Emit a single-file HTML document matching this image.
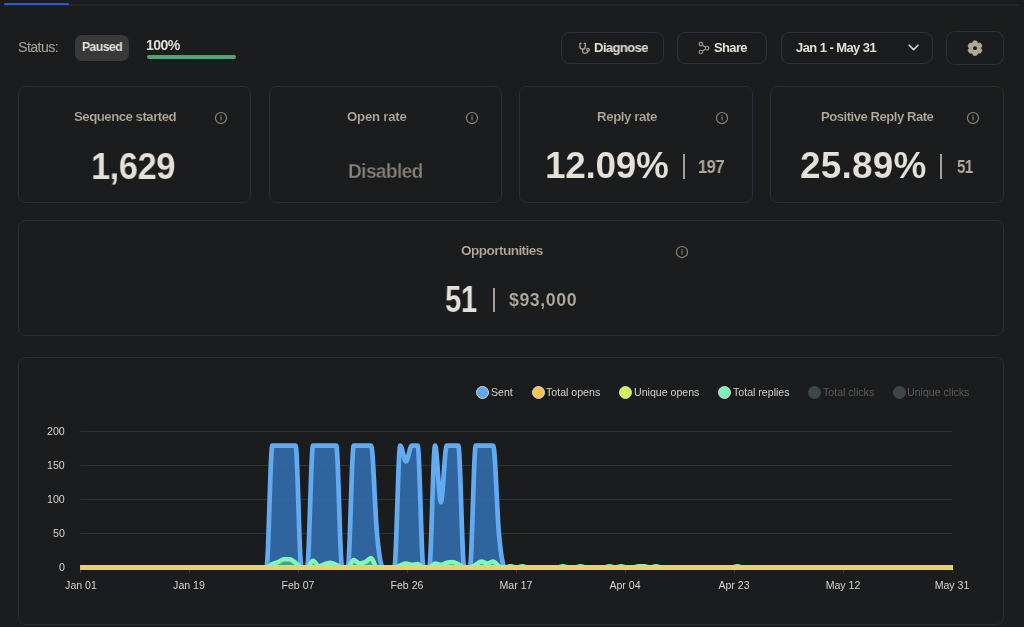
<!DOCTYPE html><html><head><meta charset="utf-8"><title>Sequence analytics</title><style>
*{margin:0;padding:0;box-sizing:border-box}
html,body{width:1024px;height:627px;overflow:hidden;background:#1b1c1e;font-family:"Liberation Sans",sans-serif}
.abs{position:absolute}
.t{white-space:nowrap;line-height:1;transform-origin:0 0;will-change:transform}
.card{position:absolute;border:1.5px solid #2a2d3a;border-radius:7.5px}
.btn{position:absolute;border:1.5px solid #2d3141;border-radius:8.5px}
.ct{position:absolute;white-space:nowrap;line-height:1;font-size:10.6px;color:#d8d3cb;will-change:transform}
</style></head><body>
<div class="abs" style="left:3.5px;top:4px;width:1015px;height:1.6px;background:#25262e"></div>
<div class="abs" style="left:3.5px;top:3.0px;width:65.5px;height:2.4px;background:#2a5ac6;border-radius:1px"></div>
<div class="abs t" style="left:17.65px;top:39.95px;font-size:14.244px;letter-spacing:-0.6px;font-weight:400;color:#a59e92;-webkit-text-stroke:0.1px #a59e92;">Status:</div>
<div class="abs" style="left:75px;top:35px;width:54px;height:26px;background:#38393a;border-radius:7px"></div>
<div class="abs t" style="left:81.68px;top:40.00px;font-size:13.081px;letter-spacing:-0.6px;font-weight:700;color:#e8e4dc;transform:scaleX(0.9357);">Paused</div>
<div class="abs t" style="left:146.4px;top:38.45px;font-size:14.099px;letter-spacing:-0.6px;font-weight:700;color:#e2ddd4;">100%</div>
<div class="abs" style="left:147px;top:55px;width:89px;height:4px;background:#4fa374;border-radius:2px"></div>
<div class="btn" style="left:560.75px;top:31.75px;width:103.50px;height:32.50px;"></div>
<div class="btn" style="left:677.25px;top:31.75px;width:90.00px;height:32.50px;"></div>
<div class="btn" style="left:780.55px;top:31.75px;width:152.10px;height:32.50px;"></div>
<div class="btn" style="left:945.75px;top:30.75px;width:58.30px;height:34.50px;"></div>
<svg class="abs" style="left:574px;top:38px" width="20" height="20" viewBox="0 0 20 20"><g fill="none" stroke="#a89f91" stroke-width="1.3" stroke-linecap="round" stroke-linejoin="round"><path d="M7.1 5.3H5.9V8.4C5.9 10.1 7 11.2 8.6 11.2C10.2 11.2 11.3 10.1 11.3 8.4V5.3H10.2"/><path d="M8.6 11.2V12.9C8.6 14.3 9.6 15.3 11 15.3C12.4 15.3 13.6 14.4 13.8 13.2"/><circle cx="14" cy="11.8" r="1.35"/></g></svg>
<div class="abs t" style="left:593.83px;top:40.60px;font-size:13.227px;letter-spacing:-0.6px;font-weight:700;color:#e4dfd6;transform:scaleX(0.9852);">Diagnose</div>
<svg class="abs" style="left:694px;top:38px" width="20" height="20" viewBox="0 0 20 20"><g fill="none" stroke="#a89f91" stroke-width="1.1"><circle cx="6.9" cy="6.1" r="1.75"/><circle cx="13.1" cy="10.2" r="1.75"/><circle cx="6.9" cy="14" r="1.75"/><path d="M8.4 7.1L11.5 9.2M11.5 11.2L8.4 13"/></g></svg>
<div class="abs t" style="left:713.95px;top:41.70px;font-size:12.936px;letter-spacing:-0.6px;font-weight:700;color:#e4dfd6;">Share</div>
<div class="abs t" style="left:796.0px;top:41.70px;font-size:12.936px;letter-spacing:-0.538px;font-weight:700;color:#e4dfd6;">Jan 1 - May 31</div>
<svg class="abs" style="left:904px;top:40px" width="20" height="14" viewBox="0 0 20 14"><path d="M5.2 5.2L9.6 9.6L14 5.2" fill="none" stroke="#d8d2c8" stroke-width="1.6" stroke-linecap="round" stroke-linejoin="round"/></svg>
<svg class="abs" style="left:965px;top:38px" width="20" height="20" viewBox="0 0 20 20"><path d="M11.52,3.01 L8.48,3.01 L7.78,4.36 L7.15,5.21 L6.10,5.33 L4.58,5.27 L3.06,7.89 L3.88,9.18 L4.30,10.15 L3.88,11.12 L3.06,12.41 L4.58,15.03 L6.10,14.97 L7.15,15.09 L7.78,15.94 L8.48,17.29 L11.52,17.29 L12.22,15.94 L12.85,15.09 L13.90,14.97 L15.42,15.03 L16.94,12.41 L16.12,11.12 L15.70,10.15 L16.12,9.18 L16.94,7.89 L15.42,5.27 L13.90,5.33 L12.85,5.21 L12.22,4.36Z" fill="#b0a798" stroke="#b0a798" stroke-width="1" stroke-linejoin="round"/><circle cx="10" cy="10.15" r="1.95" fill="#1b1c1e"/></svg>
<div class="card" style="left:17.65px;top:86.10px;width:233.70px;height:116.65px;"></div>
<svg class="abs" style="left:213.50px;top:110.80px" width="14" height="14" viewBox="0 0 14 14"><circle cx="7" cy="7" r="5.55" fill="none" stroke="#8f877b" stroke-width="1.15"/><circle cx="7" cy="4.75" r="0.7" fill="#8f877b"/><path d="M6.3 6.55H7.05V9.6" fill="none" stroke="#8f877b" stroke-width="1.05"/></svg>
<div class="card" style="left:268.65px;top:86.10px;width:233.70px;height:116.65px;"></div>
<svg class="abs" style="left:464.50px;top:110.80px" width="14" height="14" viewBox="0 0 14 14"><circle cx="7" cy="7" r="5.55" fill="none" stroke="#8f877b" stroke-width="1.15"/><circle cx="7" cy="4.75" r="0.7" fill="#8f877b"/><path d="M6.3 6.55H7.05V9.6" fill="none" stroke="#8f877b" stroke-width="1.05"/></svg>
<div class="card" style="left:519.15px;top:86.10px;width:233.70px;height:116.65px;"></div>
<svg class="abs" style="left:715.00px;top:110.80px" width="14" height="14" viewBox="0 0 14 14"><circle cx="7" cy="7" r="5.55" fill="none" stroke="#8f877b" stroke-width="1.15"/><circle cx="7" cy="4.75" r="0.7" fill="#8f877b"/><path d="M6.3 6.55H7.05V9.6" fill="none" stroke="#8f877b" stroke-width="1.05"/></svg>
<div class="card" style="left:770.25px;top:86.10px;width:233.70px;height:116.65px;"></div>
<svg class="abs" style="left:966.10px;top:110.80px" width="14" height="14" viewBox="0 0 14 14"><circle cx="7" cy="7" r="5.55" fill="none" stroke="#8f877b" stroke-width="1.15"/><circle cx="7" cy="4.75" r="0.7" fill="#8f877b"/><path d="M6.3 6.55H7.05V9.6" fill="none" stroke="#8f877b" stroke-width="1.05"/></svg>
<div class="abs t" style="left:74.47px;top:110.20px;font-size:13.081px;letter-spacing:-0.507px;font-weight:700;color:#b3aa9b;transform:scaleX(1.012);-webkit-text-stroke:0.15px #1b1c1e;">Sequence started</div>
<div class="abs t" style="left:346.5px;top:111.20px;font-size:12.936px;letter-spacing:-0.2px;font-weight:700;color:#b3aa9b;transform:scaleX(1.0191);-webkit-text-stroke:0.15px #1b1c1e;">Open rate</div>
<div class="abs t" style="left:596.7px;top:111.20px;font-size:12.936px;letter-spacing:-0.4px;font-weight:700;color:#b3aa9b;transform:scaleX(1.0271);-webkit-text-stroke:0.15px #1b1c1e;">Reply rate</div>
<div class="abs t" style="left:821.38px;top:111.20px;font-size:12.936px;letter-spacing:-0.475px;font-weight:700;color:#b3aa9b;transform:scaleX(1.0132);-webkit-text-stroke:0.15px #1b1c1e;">Positive Reply Rate</div>
<div class="abs t" style="left:91.48px;top:147.60px;font-size:37.209px;letter-spacing:-0.6px;font-weight:700;color:#e6e1d8;transform:scaleX(0.9314);-webkit-text-stroke:0.15px #1b1c1e;">1,629</div>
<div class="abs t" style="left:347.58px;top:162.25px;font-size:19.331px;letter-spacing:-0.6px;font-weight:700;color:#8a8378;transform:scaleX(0.985);-webkit-text-stroke:0.3px #1b1c1e;">Disabled</div>
<div class="abs t" style="left:545.02px;top:148.05px;font-size:36.047px;letter-spacing:-0.32px;font-weight:700;color:#e6e1d8;transform:scaleX(1.0277);-webkit-text-stroke:0.15px #1b1c1e;">12.09%</div>
<div class="abs t" style="left:698.22px;top:158.75px;font-size:17.878px;letter-spacing:-0.6px;font-weight:700;color:#b0a899;transform:scaleX(0.9271);">197</div>
<div class="abs t" style="left:800.1px;top:147.90px;font-size:36.337px;letter-spacing:0.2px;font-weight:700;color:#e6e1d8;transform:scaleX(1.0172);-webkit-text-stroke:0.15px #1b1c1e;">25.89%</div>
<div class="abs t" style="left:956.68px;top:158.75px;font-size:17.878px;letter-spacing:-0.6px;font-weight:700;color:#b0a899;transform:scaleX(0.8438);">51</div>
<div class="abs" style="left:683.1px;top:154px;width:2px;height:24.7px;background:#a59e92"></div>
<div class="abs" style="left:940.4px;top:154px;width:2px;height:24.7px;background:#a59e92"></div>
<div class="card" style="left:17.65px;top:219.75px;width:986.30px;height:116.50px;"></div>
<svg class="abs" style="left:674.85px;top:244.60px" width="14" height="14" viewBox="0 0 14 14"><circle cx="7" cy="7" r="5.55" fill="none" stroke="#8f877b" stroke-width="1.15"/><circle cx="7" cy="4.75" r="0.7" fill="#8f877b"/><path d="M6.3 6.55H7.05V9.6" fill="none" stroke="#8f877b" stroke-width="1.05"/></svg>
<div class="abs t" style="left:460.7px;top:244.10px;font-size:13.663px;letter-spacing:-0.6px;font-weight:700;color:#b3aa9b;-webkit-text-stroke:0.15px #1b1c1e;">Opportunities</div>
<div class="abs t" style="left:445.35px;top:281.85px;font-size:36.773px;letter-spacing:-0.6px;font-weight:700;color:#e6e1d8;transform:scaleX(0.8013);-webkit-text-stroke:0.15px #1b1c1e;">51</div>
<div class="abs t" style="left:508.8px;top:292.00px;font-size:17.587px;letter-spacing:0.525px;font-weight:700;color:#b0a899;transform:scaleX(1.0129);-webkit-text-stroke:0.1px #1b1c1e;">$93,000</div>
<div class="abs" style="left:492.6px;top:288px;width:2px;height:24.3px;background:#a59e92"></div>
<div class="card" style="left:17.65px;top:357.35px;width:986.30px;height:267.30px;"></div>
<div class="abs" style="left:476.30px;top:385.7px;width:13.2px;height:13.2px;border-radius:50%;background:#5fa8ef;border:1px solid #d8d3cb"></div>
<div class="ct" style="left:490.90px;top:387.0px;color:#d6d1c9">Sent</div>
<div class="abs" style="left:531.80px;top:385.7px;width:13.2px;height:13.2px;border-radius:50%;background:#f5c452;border:1px solid #d8d3cb"></div>
<div class="ct" style="left:546.40px;top:387.0px;color:#d6d1c9">Total opens</div>
<div class="abs" style="left:618.90px;top:385.7px;width:13.2px;height:13.2px;border-radius:50%;background:#d4f05a;border:1px solid #d8d3cb"></div>
<div class="ct" style="left:633.50px;top:387.0px;color:#d6d1c9">Unique opens</div>
<div class="abs" style="left:718.10px;top:385.7px;width:13.2px;height:13.2px;border-radius:50%;background:#7ef0b9;border:1px solid #d8d3cb"></div>
<div class="ct" style="left:732.70px;top:387.0px;color:#d6d1c9">Total replies</div>
<div class="abs" style="left:808.25px;top:385.7px;width:13.2px;height:13.2px;border-radius:50%;background:#3d4849;border:1px solid #3d4849"></div>
<div class="ct" style="left:822.85px;top:387.0px;color:#5f5b55">Total clicks</div>
<div class="abs" style="left:892.70px;top:385.7px;width:13.2px;height:13.2px;border-radius:50%;background:#3d4849;border:1px solid #3d4849"></div>
<div class="ct" style="left:907.30px;top:387.0px;color:#5f5b55">Unique clicks</div>
<div class="ct" style="right:959.5px;top:562.20px;text-align:right">0</div>
<div class="ct" style="right:959.5px;top:528.20px;text-align:right">50</div>
<div class="ct" style="right:959.5px;top:494.20px;text-align:right">100</div>
<div class="ct" style="right:959.5px;top:460.20px;text-align:right">150</div>
<div class="ct" style="right:959.5px;top:426.20px;text-align:right">200</div>
<div class="ct" style="left:40.50px;width:80px;text-align:center;top:580.2px">Jan 01</div>
<div class="ct" style="left:149.49px;width:80px;text-align:center;top:580.2px">Jan 19</div>
<div class="ct" style="left:258.48px;width:80px;text-align:center;top:580.2px">Feb 07</div>
<div class="ct" style="left:367.46px;width:80px;text-align:center;top:580.2px">Feb 26</div>
<div class="ct" style="left:476.45px;width:80px;text-align:center;top:580.2px">Mar 17</div>
<div class="ct" style="left:585.44px;width:80px;text-align:center;top:580.2px">Apr 04</div>
<div class="ct" style="left:694.42px;width:80px;text-align:center;top:580.2px">Apr 23</div>
<div class="ct" style="left:803.41px;width:80px;text-align:center;top:580.2px">May 12</div>
<div class="ct" style="left:912.40px;width:80px;text-align:center;top:580.2px">May 31</div>
<svg class="abs" style="left:0;top:0" width="1024" height="627" viewBox="0 0 1024 627">
<line x1="80.5" y1="533.5" x2="952.4" y2="533.5" stroke="#303133" stroke-width="1"/>
<line x1="80.5" y1="499.5" x2="952.4" y2="499.5" stroke="#303133" stroke-width="1"/>
<line x1="80.5" y1="465.5" x2="952.4" y2="465.5" stroke="#303133" stroke-width="1"/>
<line x1="80.5" y1="431.5" x2="952.4" y2="431.5" stroke="#303133" stroke-width="1"/>
<line x1="80.50" y1="567.5" x2="80.50" y2="573" stroke="#3a3b3d" stroke-width="1"/>
<line x1="189.49" y1="567.5" x2="189.49" y2="573" stroke="#3a3b3d" stroke-width="1"/>
<line x1="298.48" y1="567.5" x2="298.48" y2="573" stroke="#3a3b3d" stroke-width="1"/>
<line x1="407.46" y1="567.5" x2="407.46" y2="573" stroke="#3a3b3d" stroke-width="1"/>
<line x1="516.45" y1="567.5" x2="516.45" y2="573" stroke="#3a3b3d" stroke-width="1"/>
<line x1="625.44" y1="567.5" x2="625.44" y2="573" stroke="#3a3b3d" stroke-width="1"/>
<line x1="734.42" y1="567.5" x2="734.42" y2="573" stroke="#3a3b3d" stroke-width="1"/>
<line x1="843.41" y1="567.5" x2="843.41" y2="573" stroke="#3a3b3d" stroke-width="1"/>
<line x1="952.40" y1="567.5" x2="952.40" y2="573" stroke="#3a3b3d" stroke-width="1"/>
<path d="M80.50,567.50C82.44,567.50 84.38,567.50 86.31,567.50C88.25,567.50 90.19,567.50 92.13,567.50C94.06,567.50 96.00,567.50 97.94,567.50C99.88,567.50 101.81,567.50 103.75,567.50C105.69,567.50 107.63,567.50 109.56,567.50C111.50,567.50 113.44,567.50 115.38,567.50C117.31,567.50 119.25,567.50 121.19,567.50C123.13,567.50 125.06,567.50 127.00,567.50C128.94,567.50 130.88,567.50 132.81,567.50C134.75,567.50 136.69,567.50 138.63,567.50C140.56,567.50 142.50,567.50 144.44,567.50C146.38,567.50 148.31,567.50 150.25,567.50C152.19,567.50 154.13,567.50 156.06,567.50C158.00,567.50 159.94,567.50 161.88,567.50C163.81,567.50 165.75,567.50 167.69,567.50C169.63,567.50 171.57,567.50 173.50,567.50C175.44,567.50 177.38,567.50 179.32,567.50C181.25,567.50 183.19,567.50 185.13,567.50C187.07,567.50 189.00,567.50 190.94,567.50C192.88,567.50 194.82,567.50 196.75,567.50C198.69,567.50 200.63,567.50 202.57,567.50C204.50,567.50 206.44,567.50 208.38,567.50C210.32,567.50 212.25,567.50 214.19,567.50C216.13,567.50 218.07,567.50 220.00,567.50C221.94,567.50 223.88,567.50 225.82,567.50C227.75,567.50 229.69,567.50 231.63,567.50C233.57,567.50 235.50,567.50 237.44,567.50C239.38,567.50 241.32,567.50 243.25,567.50C245.19,567.50 247.13,567.50 249.07,567.50C251.00,567.50 252.94,567.50 254.88,567.50C256.82,567.50 258.76,567.50 260.69,567.50C262.63,567.50 264.57,567.50 266.51,567.50C268.44,567.50 270.38,445.58 272.32,445.58C274.26,445.58 276.19,445.58 278.13,445.58C280.07,445.58 282.01,445.58 283.94,445.58C285.88,445.58 287.82,445.58 289.76,445.58C291.69,445.58 293.63,445.58 295.57,445.58C297.51,445.58 299.44,567.50 301.38,567.50C303.32,567.50 305.26,567.50 307.19,567.50C309.13,567.50 311.07,445.58 313.01,445.58C314.94,445.58 316.88,445.58 318.82,445.58C320.76,445.58 322.69,445.58 324.63,445.58C326.57,445.58 328.51,445.58 330.44,445.58C332.38,445.58 334.32,445.58 336.26,445.58C338.19,445.58 340.13,567.50 342.07,567.50C344.01,567.50 345.95,567.50 347.88,567.50C349.82,567.50 351.76,445.58 353.70,445.58C355.63,445.58 357.57,445.58 359.51,445.58C361.45,445.58 363.38,445.58 365.32,445.58C367.26,445.58 369.20,445.58 371.13,445.58C373.07,445.58 375.01,513.18 376.95,533.50C378.88,553.82 380.82,567.50 382.76,567.50C384.70,567.50 386.63,567.50 388.57,567.50C390.51,567.50 392.45,567.50 394.38,567.50C396.32,567.50 398.26,445.58 400.20,445.58C402.13,445.58 404.07,461.42 406.01,461.42C407.95,461.42 409.88,445.58 411.82,445.58C413.76,445.58 415.70,445.58 417.63,445.58C419.57,445.58 421.51,567.50 423.45,567.50C425.38,567.50 427.32,567.50 429.26,567.50C431.20,567.50 433.14,445.58 435.07,445.58C437.01,445.58 438.95,502.22 440.89,502.22C442.82,502.22 444.76,445.58 446.70,445.58C448.64,445.58 450.57,445.58 452.51,445.58C454.45,445.58 456.39,445.58 458.32,445.58C460.26,445.58 462.20,567.50 464.14,567.50C466.07,567.50 468.01,567.50 469.95,567.50C471.89,567.50 473.82,445.58 475.76,445.58C477.70,445.58 479.64,445.58 481.57,445.58C483.51,445.58 485.45,445.58 487.39,445.58C489.32,445.58 491.26,445.58 493.20,445.58C495.14,445.58 497.07,514.54 499.01,534.86C500.95,555.18 502.89,567.50 504.82,567.50C506.76,567.50 508.70,567.50 510.64,567.50C512.57,567.50 514.51,567.50 516.45,567.50C518.39,567.50 520.33,567.50 522.26,567.50C524.20,567.50 526.14,567.50 528.08,567.50C530.01,567.50 531.95,567.50 533.89,567.50C535.83,567.50 537.76,567.50 539.70,567.50C541.64,567.50 543.58,567.50 545.51,567.50C547.45,567.50 549.39,567.50 551.33,567.50C553.26,567.50 555.20,567.50 557.14,567.50C559.08,567.50 561.01,567.50 562.95,567.50C564.89,567.50 566.83,567.50 568.76,567.50C570.70,567.50 572.64,567.50 574.58,567.50C576.51,567.50 578.45,567.50 580.39,567.50C582.33,567.50 584.26,567.50 586.20,567.50C588.14,567.50 590.08,567.50 592.01,567.50C593.95,567.50 595.89,567.50 597.83,567.50C599.76,567.50 601.70,567.50 603.64,567.50C605.58,567.50 607.52,567.50 609.45,567.50C611.39,567.50 613.33,567.50 615.27,567.50C617.20,567.50 619.14,567.50 621.08,567.50C623.02,567.50 624.95,567.50 626.89,567.50C628.83,567.50 630.77,567.50 632.70,567.50C634.64,567.50 636.58,567.50 638.52,567.50C640.45,567.50 642.39,567.50 644.33,567.50C646.27,567.50 648.20,567.50 650.14,567.50C652.08,567.50 654.02,567.50 655.95,567.50C657.89,567.50 659.83,567.50 661.77,567.50C663.70,567.50 665.64,567.50 667.58,567.50C669.52,567.50 671.45,567.50 673.39,567.50C675.33,567.50 677.27,567.50 679.20,567.50C681.14,567.50 683.08,567.50 685.02,567.50C686.95,567.50 688.89,567.50 690.83,567.50C692.77,567.50 694.71,567.50 696.64,567.50C698.58,567.50 700.52,567.50 702.46,567.50C704.39,567.50 706.33,567.50 708.27,567.50C710.21,567.50 712.14,567.50 714.08,567.50C716.02,567.50 717.96,567.50 719.89,567.50C721.83,567.50 723.77,567.50 725.71,567.50C727.64,567.50 729.58,567.50 731.52,567.50C733.46,567.50 735.39,567.50 737.33,567.50C739.27,567.50 741.21,567.50 743.14,567.50C745.08,567.50 747.02,567.50 748.96,567.50C750.89,567.50 752.83,567.50 754.77,567.50C756.71,567.50 758.64,567.50 760.58,567.50C762.52,567.50 764.46,567.50 766.39,567.50C768.33,567.50 770.27,567.50 772.21,567.50C774.14,567.50 776.08,567.50 778.02,567.50C779.96,567.50 781.90,567.50 783.83,567.50C785.77,567.50 787.71,567.50 789.65,567.50C791.58,567.50 793.52,567.50 795.46,567.50C797.40,567.50 799.33,567.50 801.27,567.50C803.21,567.50 805.15,567.50 807.08,567.50C809.02,567.50 810.96,567.50 812.90,567.50C814.83,567.50 816.77,567.50 818.71,567.50C820.65,567.50 822.58,567.50 824.52,567.50C826.46,567.50 828.40,567.50 830.33,567.50C832.27,567.50 834.21,567.50 836.15,567.50C838.08,567.50 840.02,567.50 841.96,567.50C843.90,567.50 845.83,567.50 847.77,567.50C849.71,567.50 851.65,567.50 853.58,567.50C855.52,567.50 857.46,567.50 859.40,567.50C861.33,567.50 863.27,567.50 865.21,567.50C867.15,567.50 869.09,567.50 871.02,567.50C872.96,567.50 874.90,567.50 876.84,567.50C878.77,567.50 880.71,567.50 882.65,567.50C884.59,567.50 886.52,567.50 888.46,567.50C890.40,567.50 892.34,567.50 894.27,567.50C896.21,567.50 898.15,567.50 900.09,567.50C902.02,567.50 903.96,567.50 905.90,567.50C907.84,567.50 909.77,567.50 911.71,567.50C913.65,567.50 915.59,567.50 917.52,567.50C919.46,567.50 921.40,567.50 923.34,567.50C925.27,567.50 927.21,567.50 929.15,567.50C931.09,567.50 933.02,567.50 934.96,567.50C936.90,567.50 938.84,567.50 940.77,567.50C942.71,567.50 944.65,567.50 946.59,567.50C948.52,567.50 950.46,567.50 952.40,567.50L952.40,567.50L80.50,567.50Z" fill="rgba(52,113,181,0.85)"/>
<path d="M80.50,567.50C82.44,567.50 84.38,567.50 86.31,567.50C88.25,567.50 90.19,567.50 92.13,567.50C94.06,567.50 96.00,567.50 97.94,567.50C99.88,567.50 101.81,567.50 103.75,567.50C105.69,567.50 107.63,567.50 109.56,567.50C111.50,567.50 113.44,567.50 115.38,567.50C117.31,567.50 119.25,567.50 121.19,567.50C123.13,567.50 125.06,567.50 127.00,567.50C128.94,567.50 130.88,567.50 132.81,567.50C134.75,567.50 136.69,567.50 138.63,567.50C140.56,567.50 142.50,567.50 144.44,567.50C146.38,567.50 148.31,567.50 150.25,567.50C152.19,567.50 154.13,567.50 156.06,567.50C158.00,567.50 159.94,567.50 161.88,567.50C163.81,567.50 165.75,567.50 167.69,567.50C169.63,567.50 171.57,567.50 173.50,567.50C175.44,567.50 177.38,567.50 179.32,567.50C181.25,567.50 183.19,567.50 185.13,567.50C187.07,567.50 189.00,567.50 190.94,567.50C192.88,567.50 194.82,567.50 196.75,567.50C198.69,567.50 200.63,567.50 202.57,567.50C204.50,567.50 206.44,567.50 208.38,567.50C210.32,567.50 212.25,567.50 214.19,567.50C216.13,567.50 218.07,567.50 220.00,567.50C221.94,567.50 223.88,567.50 225.82,567.50C227.75,567.50 229.69,567.50 231.63,567.50C233.57,567.50 235.50,567.50 237.44,567.50C239.38,567.50 241.32,567.50 243.25,567.50C245.19,567.50 247.13,567.50 249.07,567.50C251.00,567.50 252.94,567.50 254.88,567.50C256.82,567.50 258.76,567.50 260.69,567.50C262.63,567.50 264.57,567.50 266.51,567.50C268.44,567.50 270.38,445.58 272.32,445.58C274.26,445.58 276.19,445.58 278.13,445.58C280.07,445.58 282.01,445.58 283.94,445.58C285.88,445.58 287.82,445.58 289.76,445.58C291.69,445.58 293.63,445.58 295.57,445.58C297.51,445.58 299.44,567.50 301.38,567.50C303.32,567.50 305.26,567.50 307.19,567.50C309.13,567.50 311.07,445.58 313.01,445.58C314.94,445.58 316.88,445.58 318.82,445.58C320.76,445.58 322.69,445.58 324.63,445.58C326.57,445.58 328.51,445.58 330.44,445.58C332.38,445.58 334.32,445.58 336.26,445.58C338.19,445.58 340.13,567.50 342.07,567.50C344.01,567.50 345.95,567.50 347.88,567.50C349.82,567.50 351.76,445.58 353.70,445.58C355.63,445.58 357.57,445.58 359.51,445.58C361.45,445.58 363.38,445.58 365.32,445.58C367.26,445.58 369.20,445.58 371.13,445.58C373.07,445.58 375.01,513.18 376.95,533.50C378.88,553.82 380.82,567.50 382.76,567.50C384.70,567.50 386.63,567.50 388.57,567.50C390.51,567.50 392.45,567.50 394.38,567.50C396.32,567.50 398.26,445.58 400.20,445.58C402.13,445.58 404.07,461.42 406.01,461.42C407.95,461.42 409.88,445.58 411.82,445.58C413.76,445.58 415.70,445.58 417.63,445.58C419.57,445.58 421.51,567.50 423.45,567.50C425.38,567.50 427.32,567.50 429.26,567.50C431.20,567.50 433.14,445.58 435.07,445.58C437.01,445.58 438.95,502.22 440.89,502.22C442.82,502.22 444.76,445.58 446.70,445.58C448.64,445.58 450.57,445.58 452.51,445.58C454.45,445.58 456.39,445.58 458.32,445.58C460.26,445.58 462.20,567.50 464.14,567.50C466.07,567.50 468.01,567.50 469.95,567.50C471.89,567.50 473.82,445.58 475.76,445.58C477.70,445.58 479.64,445.58 481.57,445.58C483.51,445.58 485.45,445.58 487.39,445.58C489.32,445.58 491.26,445.58 493.20,445.58C495.14,445.58 497.07,514.54 499.01,534.86C500.95,555.18 502.89,567.50 504.82,567.50C506.76,567.50 508.70,567.50 510.64,567.50C512.57,567.50 514.51,567.50 516.45,567.50C518.39,567.50 520.33,567.50 522.26,567.50C524.20,567.50 526.14,567.50 528.08,567.50C530.01,567.50 531.95,567.50 533.89,567.50C535.83,567.50 537.76,567.50 539.70,567.50C541.64,567.50 543.58,567.50 545.51,567.50C547.45,567.50 549.39,567.50 551.33,567.50C553.26,567.50 555.20,567.50 557.14,567.50C559.08,567.50 561.01,567.50 562.95,567.50C564.89,567.50 566.83,567.50 568.76,567.50C570.70,567.50 572.64,567.50 574.58,567.50C576.51,567.50 578.45,567.50 580.39,567.50C582.33,567.50 584.26,567.50 586.20,567.50C588.14,567.50 590.08,567.50 592.01,567.50C593.95,567.50 595.89,567.50 597.83,567.50C599.76,567.50 601.70,567.50 603.64,567.50C605.58,567.50 607.52,567.50 609.45,567.50C611.39,567.50 613.33,567.50 615.27,567.50C617.20,567.50 619.14,567.50 621.08,567.50C623.02,567.50 624.95,567.50 626.89,567.50C628.83,567.50 630.77,567.50 632.70,567.50C634.64,567.50 636.58,567.50 638.52,567.50C640.45,567.50 642.39,567.50 644.33,567.50C646.27,567.50 648.20,567.50 650.14,567.50C652.08,567.50 654.02,567.50 655.95,567.50C657.89,567.50 659.83,567.50 661.77,567.50C663.70,567.50 665.64,567.50 667.58,567.50C669.52,567.50 671.45,567.50 673.39,567.50C675.33,567.50 677.27,567.50 679.20,567.50C681.14,567.50 683.08,567.50 685.02,567.50C686.95,567.50 688.89,567.50 690.83,567.50C692.77,567.50 694.71,567.50 696.64,567.50C698.58,567.50 700.52,567.50 702.46,567.50C704.39,567.50 706.33,567.50 708.27,567.50C710.21,567.50 712.14,567.50 714.08,567.50C716.02,567.50 717.96,567.50 719.89,567.50C721.83,567.50 723.77,567.50 725.71,567.50C727.64,567.50 729.58,567.50 731.52,567.50C733.46,567.50 735.39,567.50 737.33,567.50C739.27,567.50 741.21,567.50 743.14,567.50C745.08,567.50 747.02,567.50 748.96,567.50C750.89,567.50 752.83,567.50 754.77,567.50C756.71,567.50 758.64,567.50 760.58,567.50C762.52,567.50 764.46,567.50 766.39,567.50C768.33,567.50 770.27,567.50 772.21,567.50C774.14,567.50 776.08,567.50 778.02,567.50C779.96,567.50 781.90,567.50 783.83,567.50C785.77,567.50 787.71,567.50 789.65,567.50C791.58,567.50 793.52,567.50 795.46,567.50C797.40,567.50 799.33,567.50 801.27,567.50C803.21,567.50 805.15,567.50 807.08,567.50C809.02,567.50 810.96,567.50 812.90,567.50C814.83,567.50 816.77,567.50 818.71,567.50C820.65,567.50 822.58,567.50 824.52,567.50C826.46,567.50 828.40,567.50 830.33,567.50C832.27,567.50 834.21,567.50 836.15,567.50C838.08,567.50 840.02,567.50 841.96,567.50C843.90,567.50 845.83,567.50 847.77,567.50C849.71,567.50 851.65,567.50 853.58,567.50C855.52,567.50 857.46,567.50 859.40,567.50C861.33,567.50 863.27,567.50 865.21,567.50C867.15,567.50 869.09,567.50 871.02,567.50C872.96,567.50 874.90,567.50 876.84,567.50C878.77,567.50 880.71,567.50 882.65,567.50C884.59,567.50 886.52,567.50 888.46,567.50C890.40,567.50 892.34,567.50 894.27,567.50C896.21,567.50 898.15,567.50 900.09,567.50C902.02,567.50 903.96,567.50 905.90,567.50C907.84,567.50 909.77,567.50 911.71,567.50C913.65,567.50 915.59,567.50 917.52,567.50C919.46,567.50 921.40,567.50 923.34,567.50C925.27,567.50 927.21,567.50 929.15,567.50C931.09,567.50 933.02,567.50 934.96,567.50C936.90,567.50 938.84,567.50 940.77,567.50C942.71,567.50 944.65,567.50 946.59,567.50C948.52,567.50 950.46,567.50 952.40,567.50" fill="none" stroke="#62abf1" stroke-width="4.7" stroke-linejoin="round" stroke-linecap="butt"/>
<path d="M80.50,567.50C82.44,567.50 84.38,567.50 86.31,567.50C88.25,567.50 90.19,567.50 92.13,567.50C94.06,567.50 96.00,567.50 97.94,567.50C99.88,567.50 101.81,567.50 103.75,567.50C105.69,567.50 107.63,567.50 109.56,567.50C111.50,567.50 113.44,567.50 115.38,567.50C117.31,567.50 119.25,567.50 121.19,567.50C123.13,567.50 125.06,567.50 127.00,567.50C128.94,567.50 130.88,567.50 132.81,567.50C134.75,567.50 136.69,567.50 138.63,567.50C140.56,567.50 142.50,567.50 144.44,567.50C146.38,567.50 148.31,567.50 150.25,567.50C152.19,567.50 154.13,567.50 156.06,567.50C158.00,567.50 159.94,567.50 161.88,567.50C163.81,567.50 165.75,567.50 167.69,567.50C169.63,567.50 171.57,567.50 173.50,567.50C175.44,567.50 177.38,567.50 179.32,567.50C181.25,567.50 183.19,567.50 185.13,567.50C187.07,567.50 189.00,567.50 190.94,567.50C192.88,567.50 194.82,567.50 196.75,567.50C198.69,567.50 200.63,567.50 202.57,567.50C204.50,567.50 206.44,567.50 208.38,567.50C210.32,567.50 212.25,567.50 214.19,567.50C216.13,567.50 218.07,567.50 220.00,567.50C221.94,567.50 223.88,567.50 225.82,567.50C227.75,567.50 229.69,567.50 231.63,567.50C233.57,567.50 235.50,567.50 237.44,567.50C239.38,567.50 241.32,567.50 243.25,567.50C245.19,567.50 247.13,567.50 249.07,567.50C251.00,567.50 252.94,567.50 254.88,567.50C256.82,567.50 258.76,567.50 260.69,567.50C262.63,567.50 264.57,567.50 266.51,567.50C268.44,567.50 270.38,565.01 272.32,564.10C274.26,563.19 276.19,562.85 278.13,562.06C280.07,561.27 282.01,559.34 283.94,559.34C285.88,559.34 287.82,559.34 289.76,559.34C291.69,559.34 293.63,561.38 295.57,562.74C297.51,564.10 299.44,567.50 301.38,567.50C303.32,567.50 305.26,567.50 307.19,567.50C309.13,567.50 311.07,560.70 313.01,560.70C314.94,560.70 316.88,566.14 318.82,566.14C320.76,566.14 322.69,564.67 324.63,564.10C326.57,563.53 328.51,562.74 330.44,562.74C332.38,562.74 334.32,563.99 336.26,564.78C338.19,565.57 340.13,567.50 342.07,567.50C344.01,567.50 345.95,567.50 347.88,567.50C349.82,567.50 351.76,560.02 353.70,560.02C355.63,560.02 357.57,563.42 359.51,563.42C361.45,563.42 363.38,562.97 365.32,562.06C367.26,561.15 369.20,557.98 371.13,557.98C373.07,557.98 375.01,567.50 376.95,567.50C378.88,567.50 380.82,567.50 382.76,567.50C384.70,567.50 386.63,567.50 388.57,567.50C390.51,567.50 392.45,567.50 394.38,567.50C396.32,567.50 398.26,566.14 400.20,565.46C402.13,564.78 404.07,563.42 406.01,563.42C407.95,563.42 409.88,564.78 411.82,564.78C413.76,564.78 415.70,564.10 417.63,564.10C419.57,564.10 421.51,567.50 423.45,567.50C425.38,567.50 427.32,567.50 429.26,567.50C431.20,567.50 433.14,563.42 435.07,563.42C437.01,563.42 438.95,564.78 440.89,564.78C442.82,564.78 444.76,563.19 446.70,562.74C448.64,562.29 450.57,562.06 452.51,562.06C454.45,562.06 456.39,563.19 458.32,564.10C460.26,565.01 462.20,567.50 464.14,567.50C466.07,567.50 468.01,567.50 469.95,567.50C471.89,567.50 473.82,565.80 475.76,564.78C477.70,563.76 479.64,561.38 481.57,561.38C483.51,561.38 485.45,563.42 487.39,563.42C489.32,563.42 491.26,561.38 493.20,561.38C495.14,561.38 497.07,565.12 499.01,566.14C500.95,567.16 502.89,567.50 504.82,567.50C506.76,567.50 508.70,566.14 510.64,566.14C512.57,566.14 514.51,567.50 516.45,567.50C518.39,567.50 520.33,566.14 522.26,566.14C524.20,566.14 526.14,567.50 528.08,567.50C530.01,567.50 531.95,567.50 533.89,567.50C535.83,567.50 537.76,567.50 539.70,567.50C541.64,567.50 543.58,567.50 545.51,567.50C547.45,567.50 549.39,567.50 551.33,567.50C553.26,567.50 555.20,567.50 557.14,567.50C559.08,567.50 561.01,566.14 562.95,566.14C564.89,566.14 566.83,567.50 568.76,567.50C570.70,567.50 572.64,567.50 574.58,567.50C576.51,567.50 578.45,566.14 580.39,566.14C582.33,566.14 584.26,567.50 586.20,567.50C588.14,567.50 590.08,567.50 592.01,567.50C593.95,567.50 595.89,567.50 597.83,567.50C599.76,567.50 601.70,567.50 603.64,567.50C605.58,567.50 607.52,566.14 609.45,566.14C611.39,566.14 613.33,567.50 615.27,567.50C617.20,567.50 619.14,566.14 621.08,566.14C623.02,566.14 624.95,567.50 626.89,567.50C628.83,567.50 630.77,567.50 632.70,567.50C634.64,567.50 636.58,566.14 638.52,566.14C640.45,566.14 642.39,566.14 644.33,566.14C646.27,566.14 648.20,567.50 650.14,567.50C652.08,567.50 654.02,566.14 655.95,566.14C657.89,566.14 659.83,567.50 661.77,567.50C663.70,567.50 665.64,567.50 667.58,567.50C669.52,567.50 671.45,567.50 673.39,567.50C675.33,567.50 677.27,567.50 679.20,567.50C681.14,567.50 683.08,567.50 685.02,567.50C686.95,567.50 688.89,567.50 690.83,567.50C692.77,567.50 694.71,567.50 696.64,567.50C698.58,567.50 700.52,567.50 702.46,567.50C704.39,567.50 706.33,567.50 708.27,567.50C710.21,567.50 712.14,567.50 714.08,567.50C716.02,567.50 717.96,567.50 719.89,567.50C721.83,567.50 723.77,567.50 725.71,567.50C727.64,567.50 729.58,567.50 731.52,567.50C733.46,567.50 735.39,566.14 737.33,566.14C739.27,566.14 741.21,567.50 743.14,567.50C745.08,567.50 747.02,567.50 748.96,567.50C750.89,567.50 752.83,567.50 754.77,567.50C756.71,567.50 758.64,567.50 760.58,567.50C762.52,567.50 764.46,567.50 766.39,567.50C768.33,567.50 770.27,567.50 772.21,567.50C774.14,567.50 776.08,567.50 778.02,567.50C779.96,567.50 781.90,567.50 783.83,567.50C785.77,567.50 787.71,567.50 789.65,567.50C791.58,567.50 793.52,567.50 795.46,567.50C797.40,567.50 799.33,567.50 801.27,567.50C803.21,567.50 805.15,567.50 807.08,567.50C809.02,567.50 810.96,567.50 812.90,567.50C814.83,567.50 816.77,567.50 818.71,567.50C820.65,567.50 822.58,567.50 824.52,567.50C826.46,567.50 828.40,567.50 830.33,567.50C832.27,567.50 834.21,567.50 836.15,567.50C838.08,567.50 840.02,567.50 841.96,567.50C843.90,567.50 845.83,567.50 847.77,567.50C849.71,567.50 851.65,567.50 853.58,567.50C855.52,567.50 857.46,567.50 859.40,567.50C861.33,567.50 863.27,567.50 865.21,567.50C867.15,567.50 869.09,567.50 871.02,567.50C872.96,567.50 874.90,567.50 876.84,567.50C878.77,567.50 880.71,567.50 882.65,567.50C884.59,567.50 886.52,567.50 888.46,567.50C890.40,567.50 892.34,567.50 894.27,567.50C896.21,567.50 898.15,567.50 900.09,567.50C902.02,567.50 903.96,567.50 905.90,567.50C907.84,567.50 909.77,567.50 911.71,567.50C913.65,567.50 915.59,567.50 917.52,567.50C919.46,567.50 921.40,567.50 923.34,567.50C925.27,567.50 927.21,567.50 929.15,567.50C931.09,567.50 933.02,567.50 934.96,567.50C936.90,567.50 938.84,567.50 940.77,567.50C942.71,567.50 944.65,567.50 946.59,567.50C948.52,567.50 950.46,567.50 952.40,567.50L952.40,567.50L80.50,567.50Z" fill="rgba(91,205,113,0.6)"/>
<path d="M80.50,567.50C82.44,567.50 84.38,567.50 86.31,567.50C88.25,567.50 90.19,567.50 92.13,567.50C94.06,567.50 96.00,567.50 97.94,567.50C99.88,567.50 101.81,567.50 103.75,567.50C105.69,567.50 107.63,567.50 109.56,567.50C111.50,567.50 113.44,567.50 115.38,567.50C117.31,567.50 119.25,567.50 121.19,567.50C123.13,567.50 125.06,567.50 127.00,567.50C128.94,567.50 130.88,567.50 132.81,567.50C134.75,567.50 136.69,567.50 138.63,567.50C140.56,567.50 142.50,567.50 144.44,567.50C146.38,567.50 148.31,567.50 150.25,567.50C152.19,567.50 154.13,567.50 156.06,567.50C158.00,567.50 159.94,567.50 161.88,567.50C163.81,567.50 165.75,567.50 167.69,567.50C169.63,567.50 171.57,567.50 173.50,567.50C175.44,567.50 177.38,567.50 179.32,567.50C181.25,567.50 183.19,567.50 185.13,567.50C187.07,567.50 189.00,567.50 190.94,567.50C192.88,567.50 194.82,567.50 196.75,567.50C198.69,567.50 200.63,567.50 202.57,567.50C204.50,567.50 206.44,567.50 208.38,567.50C210.32,567.50 212.25,567.50 214.19,567.50C216.13,567.50 218.07,567.50 220.00,567.50C221.94,567.50 223.88,567.50 225.82,567.50C227.75,567.50 229.69,567.50 231.63,567.50C233.57,567.50 235.50,567.50 237.44,567.50C239.38,567.50 241.32,567.50 243.25,567.50C245.19,567.50 247.13,567.50 249.07,567.50C251.00,567.50 252.94,567.50 254.88,567.50C256.82,567.50 258.76,567.50 260.69,567.50C262.63,567.50 264.57,567.50 266.51,567.50C268.44,567.50 270.38,565.01 272.32,564.10C274.26,563.19 276.19,562.85 278.13,562.06C280.07,561.27 282.01,559.34 283.94,559.34C285.88,559.34 287.82,559.34 289.76,559.34C291.69,559.34 293.63,561.38 295.57,562.74C297.51,564.10 299.44,567.50 301.38,567.50C303.32,567.50 305.26,567.50 307.19,567.50C309.13,567.50 311.07,560.70 313.01,560.70C314.94,560.70 316.88,566.14 318.82,566.14C320.76,566.14 322.69,564.67 324.63,564.10C326.57,563.53 328.51,562.74 330.44,562.74C332.38,562.74 334.32,563.99 336.26,564.78C338.19,565.57 340.13,567.50 342.07,567.50C344.01,567.50 345.95,567.50 347.88,567.50C349.82,567.50 351.76,560.02 353.70,560.02C355.63,560.02 357.57,563.42 359.51,563.42C361.45,563.42 363.38,562.97 365.32,562.06C367.26,561.15 369.20,557.98 371.13,557.98C373.07,557.98 375.01,567.50 376.95,567.50C378.88,567.50 380.82,567.50 382.76,567.50C384.70,567.50 386.63,567.50 388.57,567.50C390.51,567.50 392.45,567.50 394.38,567.50C396.32,567.50 398.26,566.14 400.20,565.46C402.13,564.78 404.07,563.42 406.01,563.42C407.95,563.42 409.88,564.78 411.82,564.78C413.76,564.78 415.70,564.10 417.63,564.10C419.57,564.10 421.51,567.50 423.45,567.50C425.38,567.50 427.32,567.50 429.26,567.50C431.20,567.50 433.14,563.42 435.07,563.42C437.01,563.42 438.95,564.78 440.89,564.78C442.82,564.78 444.76,563.19 446.70,562.74C448.64,562.29 450.57,562.06 452.51,562.06C454.45,562.06 456.39,563.19 458.32,564.10C460.26,565.01 462.20,567.50 464.14,567.50C466.07,567.50 468.01,567.50 469.95,567.50C471.89,567.50 473.82,565.80 475.76,564.78C477.70,563.76 479.64,561.38 481.57,561.38C483.51,561.38 485.45,563.42 487.39,563.42C489.32,563.42 491.26,561.38 493.20,561.38C495.14,561.38 497.07,565.12 499.01,566.14C500.95,567.16 502.89,567.50 504.82,567.50C506.76,567.50 508.70,566.14 510.64,566.14C512.57,566.14 514.51,567.50 516.45,567.50C518.39,567.50 520.33,566.14 522.26,566.14C524.20,566.14 526.14,567.50 528.08,567.50C530.01,567.50 531.95,567.50 533.89,567.50C535.83,567.50 537.76,567.50 539.70,567.50C541.64,567.50 543.58,567.50 545.51,567.50C547.45,567.50 549.39,567.50 551.33,567.50C553.26,567.50 555.20,567.50 557.14,567.50C559.08,567.50 561.01,566.14 562.95,566.14C564.89,566.14 566.83,567.50 568.76,567.50C570.70,567.50 572.64,567.50 574.58,567.50C576.51,567.50 578.45,566.14 580.39,566.14C582.33,566.14 584.26,567.50 586.20,567.50C588.14,567.50 590.08,567.50 592.01,567.50C593.95,567.50 595.89,567.50 597.83,567.50C599.76,567.50 601.70,567.50 603.64,567.50C605.58,567.50 607.52,566.14 609.45,566.14C611.39,566.14 613.33,567.50 615.27,567.50C617.20,567.50 619.14,566.14 621.08,566.14C623.02,566.14 624.95,567.50 626.89,567.50C628.83,567.50 630.77,567.50 632.70,567.50C634.64,567.50 636.58,566.14 638.52,566.14C640.45,566.14 642.39,566.14 644.33,566.14C646.27,566.14 648.20,567.50 650.14,567.50C652.08,567.50 654.02,566.14 655.95,566.14C657.89,566.14 659.83,567.50 661.77,567.50C663.70,567.50 665.64,567.50 667.58,567.50C669.52,567.50 671.45,567.50 673.39,567.50C675.33,567.50 677.27,567.50 679.20,567.50C681.14,567.50 683.08,567.50 685.02,567.50C686.95,567.50 688.89,567.50 690.83,567.50C692.77,567.50 694.71,567.50 696.64,567.50C698.58,567.50 700.52,567.50 702.46,567.50C704.39,567.50 706.33,567.50 708.27,567.50C710.21,567.50 712.14,567.50 714.08,567.50C716.02,567.50 717.96,567.50 719.89,567.50C721.83,567.50 723.77,567.50 725.71,567.50C727.64,567.50 729.58,567.50 731.52,567.50C733.46,567.50 735.39,566.14 737.33,566.14C739.27,566.14 741.21,567.50 743.14,567.50C745.08,567.50 747.02,567.50 748.96,567.50C750.89,567.50 752.83,567.50 754.77,567.50C756.71,567.50 758.64,567.50 760.58,567.50C762.52,567.50 764.46,567.50 766.39,567.50C768.33,567.50 770.27,567.50 772.21,567.50C774.14,567.50 776.08,567.50 778.02,567.50C779.96,567.50 781.90,567.50 783.83,567.50C785.77,567.50 787.71,567.50 789.65,567.50C791.58,567.50 793.52,567.50 795.46,567.50C797.40,567.50 799.33,567.50 801.27,567.50C803.21,567.50 805.15,567.50 807.08,567.50C809.02,567.50 810.96,567.50 812.90,567.50C814.83,567.50 816.77,567.50 818.71,567.50C820.65,567.50 822.58,567.50 824.52,567.50C826.46,567.50 828.40,567.50 830.33,567.50C832.27,567.50 834.21,567.50 836.15,567.50C838.08,567.50 840.02,567.50 841.96,567.50C843.90,567.50 845.83,567.50 847.77,567.50C849.71,567.50 851.65,567.50 853.58,567.50C855.52,567.50 857.46,567.50 859.40,567.50C861.33,567.50 863.27,567.50 865.21,567.50C867.15,567.50 869.09,567.50 871.02,567.50C872.96,567.50 874.90,567.50 876.84,567.50C878.77,567.50 880.71,567.50 882.65,567.50C884.59,567.50 886.52,567.50 888.46,567.50C890.40,567.50 892.34,567.50 894.27,567.50C896.21,567.50 898.15,567.50 900.09,567.50C902.02,567.50 903.96,567.50 905.90,567.50C907.84,567.50 909.77,567.50 911.71,567.50C913.65,567.50 915.59,567.50 917.52,567.50C919.46,567.50 921.40,567.50 923.34,567.50C925.27,567.50 927.21,567.50 929.15,567.50C931.09,567.50 933.02,567.50 934.96,567.50C936.90,567.50 938.84,567.50 940.77,567.50C942.71,567.50 944.65,567.50 946.59,567.50C948.52,567.50 950.46,567.50 952.40,567.50" fill="none" stroke="#80f8b9" stroke-width="4.5" stroke-linejoin="round" stroke-linecap="butt"/>
<line x1="80.1" y1="567.5" x2="953.0" y2="567.5" stroke="#e5d366" stroke-width="5"/>
</svg>
</body></html>
